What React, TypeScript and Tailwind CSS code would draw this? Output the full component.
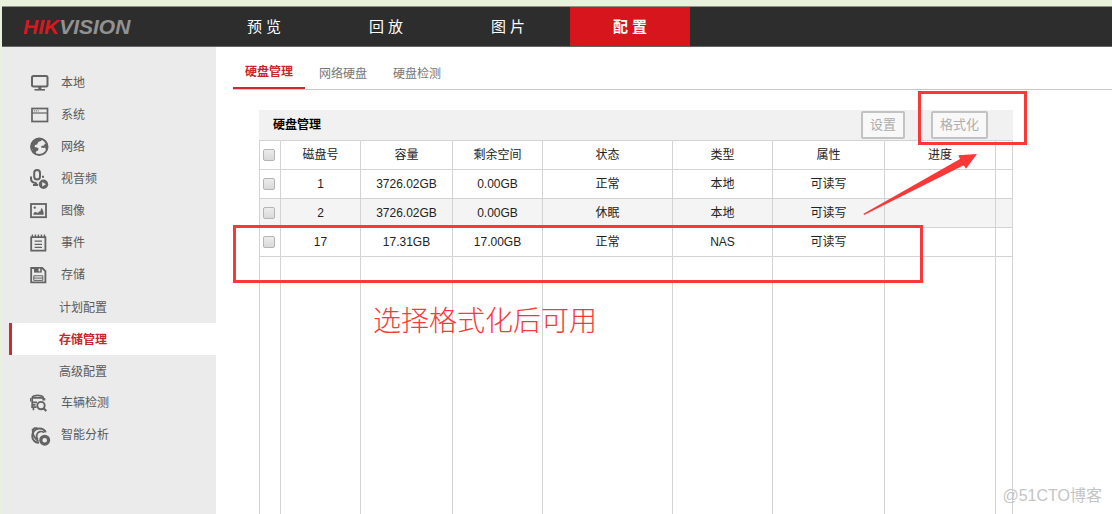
import type { ReactNode } from 'react'
import clsx from 'clsx'

const NAV = ['预 览', '回 放', '图 片', '配 置']
const TABS = ['硬盘管理', '网络硬盘', '硬盘检测']

const COLUMNS = [
  { label: '磁盘号', width: 'w-[80px]' },
  { label: '容量', width: 'w-[92px]' },
  { label: '剩余空间', width: 'w-[90px]' },
  { label: '状态', width: 'w-[130px]' },
  { label: '类型', width: 'w-[100px]' },
  { label: '属性', width: 'w-[112px]' },
  { label: '进度', width: 'w-[111px]' },
  { label: '', width: 'w-[17px]' },
]

const DISKS = [
  ['1', '3726.02GB', '0.00GB', '正常', '本地', '可读写', '', ''],
  ['2', '3726.02GB', '0.00GB', '休眠', '本地', '可读写', '', ''],
  ['17', '17.31GB', '17.00GB', '正常', 'NAS', '可读写', '', ''],
]

interface MenuItem {
  label: string
  icon?: ReactNode
  active?: boolean
}

const MENU: MenuItem[] = [
  {
    label: '本地',
    icon: (
      <>
        <rect x="3" y="3" width="15.5" height="10.5" rx="1.5" />
        <path d="M10.8 13.5v3" strokeWidth="3" />
        <path d="M5.5 16.8h10.5" strokeWidth="1.6" />
      </>
    ),
  },
  {
    label: '系统',
    icon: (
      <>
        <rect x="3" y="3.5" width="15.5" height="13" strokeWidth="1.7" />
        <path d="M3 8h15.5" strokeWidth="1.2" />
        <path d="M4.8 5.9h5" strokeWidth="1" strokeDasharray="1.2 .8" />
      </>
    ),
  },
  {
    label: '网络',
    icon: (
      <>
        <circle cx="10.3" cy="9.8" r="8.2" strokeWidth="2" />
        <path
          d="M11 1.500 13.500 2.600 11.800 4l-2.600 1-1 2.400-2.200.6-.4 2 2.400.4 1.800 1.400-1.200 2-1.600.8-.4 2.400-2.400-1.600-.6-3-2-2.500L2.200 6 7 2.300zM18.500 6.500l-2.600.3-1 1.700-2.600.5-.2 1.600 2.300.4 1.800-.6.600 2.600 1.800-1z"
          fill="currentColor"
          stroke="none"
        />
      </>
    ),
  },
  {
    label: '视音频',
    icon: (
      <>
        <rect x="5.2" y="1" width="5.8" height="9.4" rx="2.9" strokeWidth="2" />
        <path d="M2 7.500v2.200c0 2.400 2 4.100 5 4.300M14 6.800v2" strokeWidth="2" />
        <path d="M4 16h5M7.300 13.500V16" strokeWidth="1.800" />
        <circle cx="14.500" cy="15.200" r="4.700" fill="currentColor" stroke="none" />
        <path d="m13.200 12.900 3.800 2.300-3.800 2.300z" fill="#ebebeb" stroke="none" />
      </>
    ),
  },
  {
    label: '图像',
    icon: (
      <>
        <rect x="2" y="3" width="15" height="13.2" strokeWidth="1.8" />
        <circle cx="5.8" cy="6.6" r="1.2" fill="currentColor" stroke="none" />
        <path
          d="m4.200 13.800.8-2.300 1.800-.6 2.200 1.200 1.200-2 .8.800 1.500-4.200 1.300 2.300.8 2.500v2.300z"
          fill="currentColor"
          stroke="none"
        />
      </>
    ),
  },
  {
    label: '事件',
    icon: (
      <>
        <path d="M2.2 4.2h14.2v13.4H2.2z" strokeWidth="1.8" />
        <path d="M3.4 1.6v3M6.4 1.6v3M9.4 1.6v3M12.4 1.6v3M15.4 1.6v3" strokeWidth="1.4" />
        <path d="M5.6 8.2H13M5.6 11.3H13M5.6 14.4H13" strokeWidth="1.2" />
      </>
    ),
  },
  {
    label: '存储',
    icon: (
      <>
        <path d="M2.2 3h11l3.2 3.2v11.2H2.2z" strokeWidth="1.8" />
        <path d="M5 3h7.8v4.6H5z" fill="currentColor" stroke="none" />
        <path d="M9.6 3.6h1.6v2.8H9.6z" fill="#ebebeb" stroke="none" />
        <path d="M4.8 10.8h9v4.6h-9zM4.8 13.1h9" strokeWidth="1" />
      </>
    ),
  },
  { label: '计划配置' },
  { label: '存储管理', active: true },
  { label: '高级配置' },
  {
    label: '车辆检测',
    icon: (
      <>
        <path
          d="M3.200 14.500V4.600c0-1 .8-1.600 2-1.800 2-.4 5-.4 7 0 1.200.2 2 .8 2 1.800v3"
          strokeWidth="1.700"
        />
        <path d="M3 4.800h11.400M3 9.300h5" strokeWidth="1.700" />
        <path d="M1.600 5v3.500M15.700 5v2.500" strokeWidth="1.200" />
        <path d="M2.400 14.200h5.200M4.400 14v3.200M4 11.800h2.500" strokeWidth="1.700" />
        <circle cx="12" cy="12.600" r="3.700" strokeWidth="1.900" />
        <path d="m14.500 15.200 2.800 2.800" strokeWidth="2.200" />
      </>
    ),
  },
  {
    label: '智能分析',
    icon: (
      <>
        <path
          d="M10 17.600c-3.800.4-6.700-2.400-6.700-6.400 0-4.600 3-7.800 7-7.800 3 0 5.400 1.300 6.400 4"
          strokeWidth="2"
        />
        <path d="M4 4c-1.200 3.500 1 9.500 5.500 12.500" strokeWidth="1.700" />
        <path d="M15 7.500c-2.500-1.800-5.800-1-7 1.500-.8 2-.3 4 1 5.500" strokeWidth="1.700" />
        <path d="m3 5.500 2.600-2.300h3" strokeWidth="1.800" />
        <circle cx="15.700" cy="15.200" r="3.900" fill="#ebebeb" strokeWidth="3.200" />
      </>
    ),
  },
]

function Checkbox({ label }: { label: string }) {
  return (
    <input
      type="checkbox"
      aria-label={label}
      className="ml-[3px] block size-3 appearance-none rounded-xs border border-[#b4b4b4] bg-linear-to-b from-[#ececec] to-[#d9d9d9]"
    />
  )
}

function Header() {
  return (
    <header className="flex h-[41px] items-stretch border-t border-b border-t-[#8f9189] border-b-[#666] bg-[#2d2d2d]">
      <div className="flex w-[202px] shrink-0 items-center pl-[21px] text-[21px] font-bold italic">
        <span className="text-[#d7181f]">HIK</span>
        <span className="text-[#929292]">VISION</span>
      </div>
      <nav className="flex gap-0.5">
        {NAV.map((label, i) => (
          <a
            key={label}
            href="#"
            className={clsx(
              'flex w-[120px] items-center justify-center text-[15px] text-white',
              i === 3 && 'bg-[#d7151c] font-bold',
            )}
          >
            {label}
          </a>
        ))}
      </nav>
    </header>
  )
}

function Sidebar() {
  return (
    <aside className="w-[214px] shrink-0 bg-[#ebebeb] pt-5">
      <ul>
        {MENU.map((item) => (
          <li key={item.label} className="pl-[7px]">
            <a
              href="#"
              className={clsx(
                'flex h-8 items-center gap-3 border-l-3',
                item.icon ? 'pl-[17px]' : 'pt-0.5 pl-[47px]',
                item.active
                  ? 'border-[#cf2a32] bg-white font-bold text-[#c9252d]'
                  : 'border-transparent text-[#5a5a5a]',
              )}
            >
              {item.icon && (
                <svg
                  viewBox="0 0 20 20"
                  className="size-5 overflow-visible text-[#636363]"
                  fill="none"
                  stroke="currentColor"
                  strokeWidth="2"
                  aria-hidden
                >
                  {item.icon}
                </svg>
              )}
              {item.label}
            </a>
          </li>
        ))}
      </ul>
    </aside>
  )
}

function DiskTable() {
  return (
    <table className="h-full w-full table-fixed border-separate border-spacing-0 border-l border-[#d3d3d3] text-center text-[#222]">
      <colgroup>
        <col className="w-[21px]" />
        {COLUMNS.map((c, i) => (
          <col key={i} className={c.width} />
        ))}
      </colgroup>
      <thead>
        <tr className="h-[29px]">
          <th className="border-r border-b border-[#d3d3d3] p-0">
            <Checkbox label="全选" />
          </th>
          {COLUMNS.map((c, i) => (
            <th key={i} className="border-r border-b border-[#d3d3d3] p-0 font-normal">
              {c.label}
            </th>
          ))}
        </tr>
      </thead>
      <tbody>
        {DISKS.map((row) => (
          <tr key={row[0]} className="h-[29px] even:bg-[#f4f4f4]">
            <td className="border-r border-b border-[#d3d3d3] p-0">
              <Checkbox label={row[0]} />
            </td>
            {row.map((cell, i) => (
              <td key={i} className="border-r border-b border-[#d3d3d3] p-0">
                {cell}
              </td>
            ))}
          </tr>
        ))}
        {/* filler row, carries the column lines down to the bottom */}
        <tr>
          <td className="border-r border-[#d3d3d3] p-0" />
          {COLUMNS.map((_, i) => (
            <td key={i} className="border-r border-[#d3d3d3] p-0" />
          ))}
        </tr>
      </tbody>
    </table>
  )
}

export default function App() {
  return (
    <div className="relative flex h-screen flex-col overflow-hidden bg-[#e8f1db] pt-1.5 pl-0.5 font-['Liberation_Sans','Noto_Sans_CJK_SC',sans-serif] text-xs">
      <Header />
      <div className="flex min-h-0 flex-1">
        <Sidebar />
        <main className="flex min-w-0 flex-1 flex-col bg-white pt-2.5 pl-[17px]">
          <div className="flex h-[33px] items-start gap-0.5 border-b border-[#c8c8c8]">
            {TABS.map((tab, i) => (
              <button
                key={tab}
                className={clsx(
                  'h-8 px-3',
                  i === 0
                    ? 'border-b-2 border-[#cf2a32] font-bold text-[#c9252d]'
                    : 'pt-0.5 text-[#777]',
                )}
              >
                {tab}
              </button>
            ))}
          </div>

          <section className="mt-5 ml-[26px] flex min-h-0 max-w-[754px] flex-1 flex-col">
            <div className="flex h-[31px] shrink-0 items-center gap-[26px] border-b border-[#d3d3d3] bg-[#f1f1f1] pr-[25px] pl-3.5">
              <h2 className="flex-1 font-bold text-black">硬盘管理</h2>
              <button className="h-7 rounded-xs border-2 border-[#c2c2c2] bg-[#f8f8f8] px-[7px] text-[13px] text-[#adadad]">
                设置
              </button>
              <button className="h-7 rounded-xs border-2 border-[#c2c2c2] bg-[#f8f8f8] px-[7px] text-[13px] text-[#adadad]">
                格式化
              </button>
            </div>
            <div className="min-h-0 flex-1">
              <DiskTable />
            </div>
          </section>
        </main>
      </div>

      {/* hand-drawn notes on top of the page */}
      <div className="pointer-events-none absolute top-[225px] left-[233px] h-[58px] w-[690px] border-3 border-[#fb3838]" />
      <div className="pointer-events-none absolute top-[91px] left-[918px] h-[54px] w-[109px] border-3 border-[#fb3838]" />
      <svg
        viewBox="0 0 116 64"
        className="pointer-events-none absolute top-[152px] left-[862px] h-16 w-[116px]"
        fill="#fb3838"
        aria-hidden
      >
        <path d="M1.500 61.800 98 7 96.300 3.300 115 2 104 16.800 101.800 13.300 2 63z" />
      </svg>
      <p className="pointer-events-none absolute top-[302px] left-[373px] text-[28px] leading-10 font-light text-[#fb3838]">
        选择格式化后可用
      </p>
      <p className="pointer-events-none absolute right-2.5 bottom-1.5 text-base text-[#c4c4c4]">
        @51CTO博客
      </p>
    </div>
  )
}
